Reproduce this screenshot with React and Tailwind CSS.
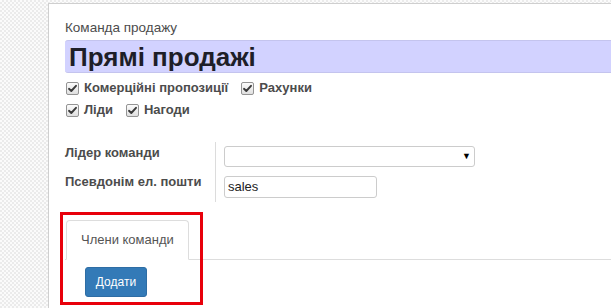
import React from "react";

function Check() {
  return (
    <svg width="13" height="13" viewBox="0 0 13 13" className="shrink-0">
      <defs>
        <linearGradient id="cbg" x1="0" y1="0" x2="0" y2="1">
          <stop offset="0" stopColor="#fdfdfd" />
          <stop offset="1" stopColor="#dedede" />
        </linearGradient>
      </defs>
      <rect x="0.5" y="0.5" width="12" height="12" rx="1.5" fill="url(#cbg)" stroke="#949494" />
      <path d="M3 6.8 L5.3 9 L10 3.8" fill="none" stroke="#3a3a3a" strokeWidth="1.9" strokeLinecap="round" strokeLinejoin="round" />
    </svg>
  );
}

function CbItem({ label }) {
  return (
    <div className="flex items-center mr-[12px]">
      <span className="ml-[1px] mr-[5px] flex"><Check /></span>
      <span className="font-bold text-[13px] text-[#4c4c4c]">{label}</span>
    </div>
  );
}

export default function App() {
  return (
    <div
      className="w-[611px] h-[308px] overflow-hidden flex pl-[48px] pt-[3px] bg-[repeating-conic-gradient(#ebebeb_0_25%,#fbfbfb_0_50%)] bg-[length:4px_4px]"
      style={{ fontFamily: '"Liberation Sans", Arial, sans-serif' }}
    >
      <div className="relative flex-1 bg-white border-l border-t border-[#cfcfcf] pl-[16px] pt-[15px] overflow-hidden">
        <div className="text-[13.5px] leading-[18px] text-[#4c4c4c]">Команда продажу</div>
        <div className="mt-[3px] h-[33px] w-[600px] rounded-l-[3px] bg-[#d2d2ff] border-y border-[#c4c4ee] flex items-center pl-[4px]">
          <span className="text-[26px] font-bold text-[#1e1e28] leading-none">Прямі продажі</span>
        </div>
        <div className="mt-[4px] flex h-[22px] items-center">
          <CbItem label="Комерційні пропозиції" />
          <CbItem label="Рахунки" />
        </div>
        <div className="flex h-[22px] items-center">
          <CbItem label="Ліди" />
          <CbItem label="Нагоди" />
        </div>

        <div className="mt-[21px] grid grid-cols-[151px_1fr] text-[13px]">
          <div className="h-[29px] border-r border-[#dcdcdc] font-bold text-[#4c4c4c] leading-[22px]">Лідер команди</div>
          <div className="h-[29px] pl-[8px] pt-[4px]">
            <div className="w-[251px] h-[21px] border border-[#cccccc] rounded-[3px] flex items-center justify-end pr-[3px]">
              <span className="text-[9px] text-black leading-none">▼</span>
            </div>
          </div>
          <div className="h-[31px] border-r border-[#dcdcdc] font-bold text-[#4c4c4c] leading-[22px]">Псевдонім ел. пошти</div>
          <div className="h-[31px] pl-[8px] pt-[5px]">
            <div className="w-[153px] h-[22px] border border-[#cccccc] rounded-[3px] flex items-center pl-[3px] text-[13px] text-[#222]">sales</div>
          </div>
        </div>

        <div className="mt-[18px] flex border-b border-[#dddddd]">
          <div className="ml-[1px] -mb-px bg-white border border-[#dddddd] border-b-white rounded-t-[4px] px-[14px] py-[10px] text-[13px] leading-[18px] text-[#555555]">
            Члени команди
          </div>
        </div>
        <div className="mt-[7px] ml-[20px]">
          <div className="inline-flex items-center justify-center w-[62px] h-[30px] rounded-[3px] bg-[#337ab7] border border-[#2e6da4] text-white text-[12px]">
            Додати
          </div>
        </div>

        <div className="absolute left-[11px] top-[208px] w-[143px] h-[93px] border-[3px] border-[#e8000b]" />
      </div>
    </div>
  );
}
